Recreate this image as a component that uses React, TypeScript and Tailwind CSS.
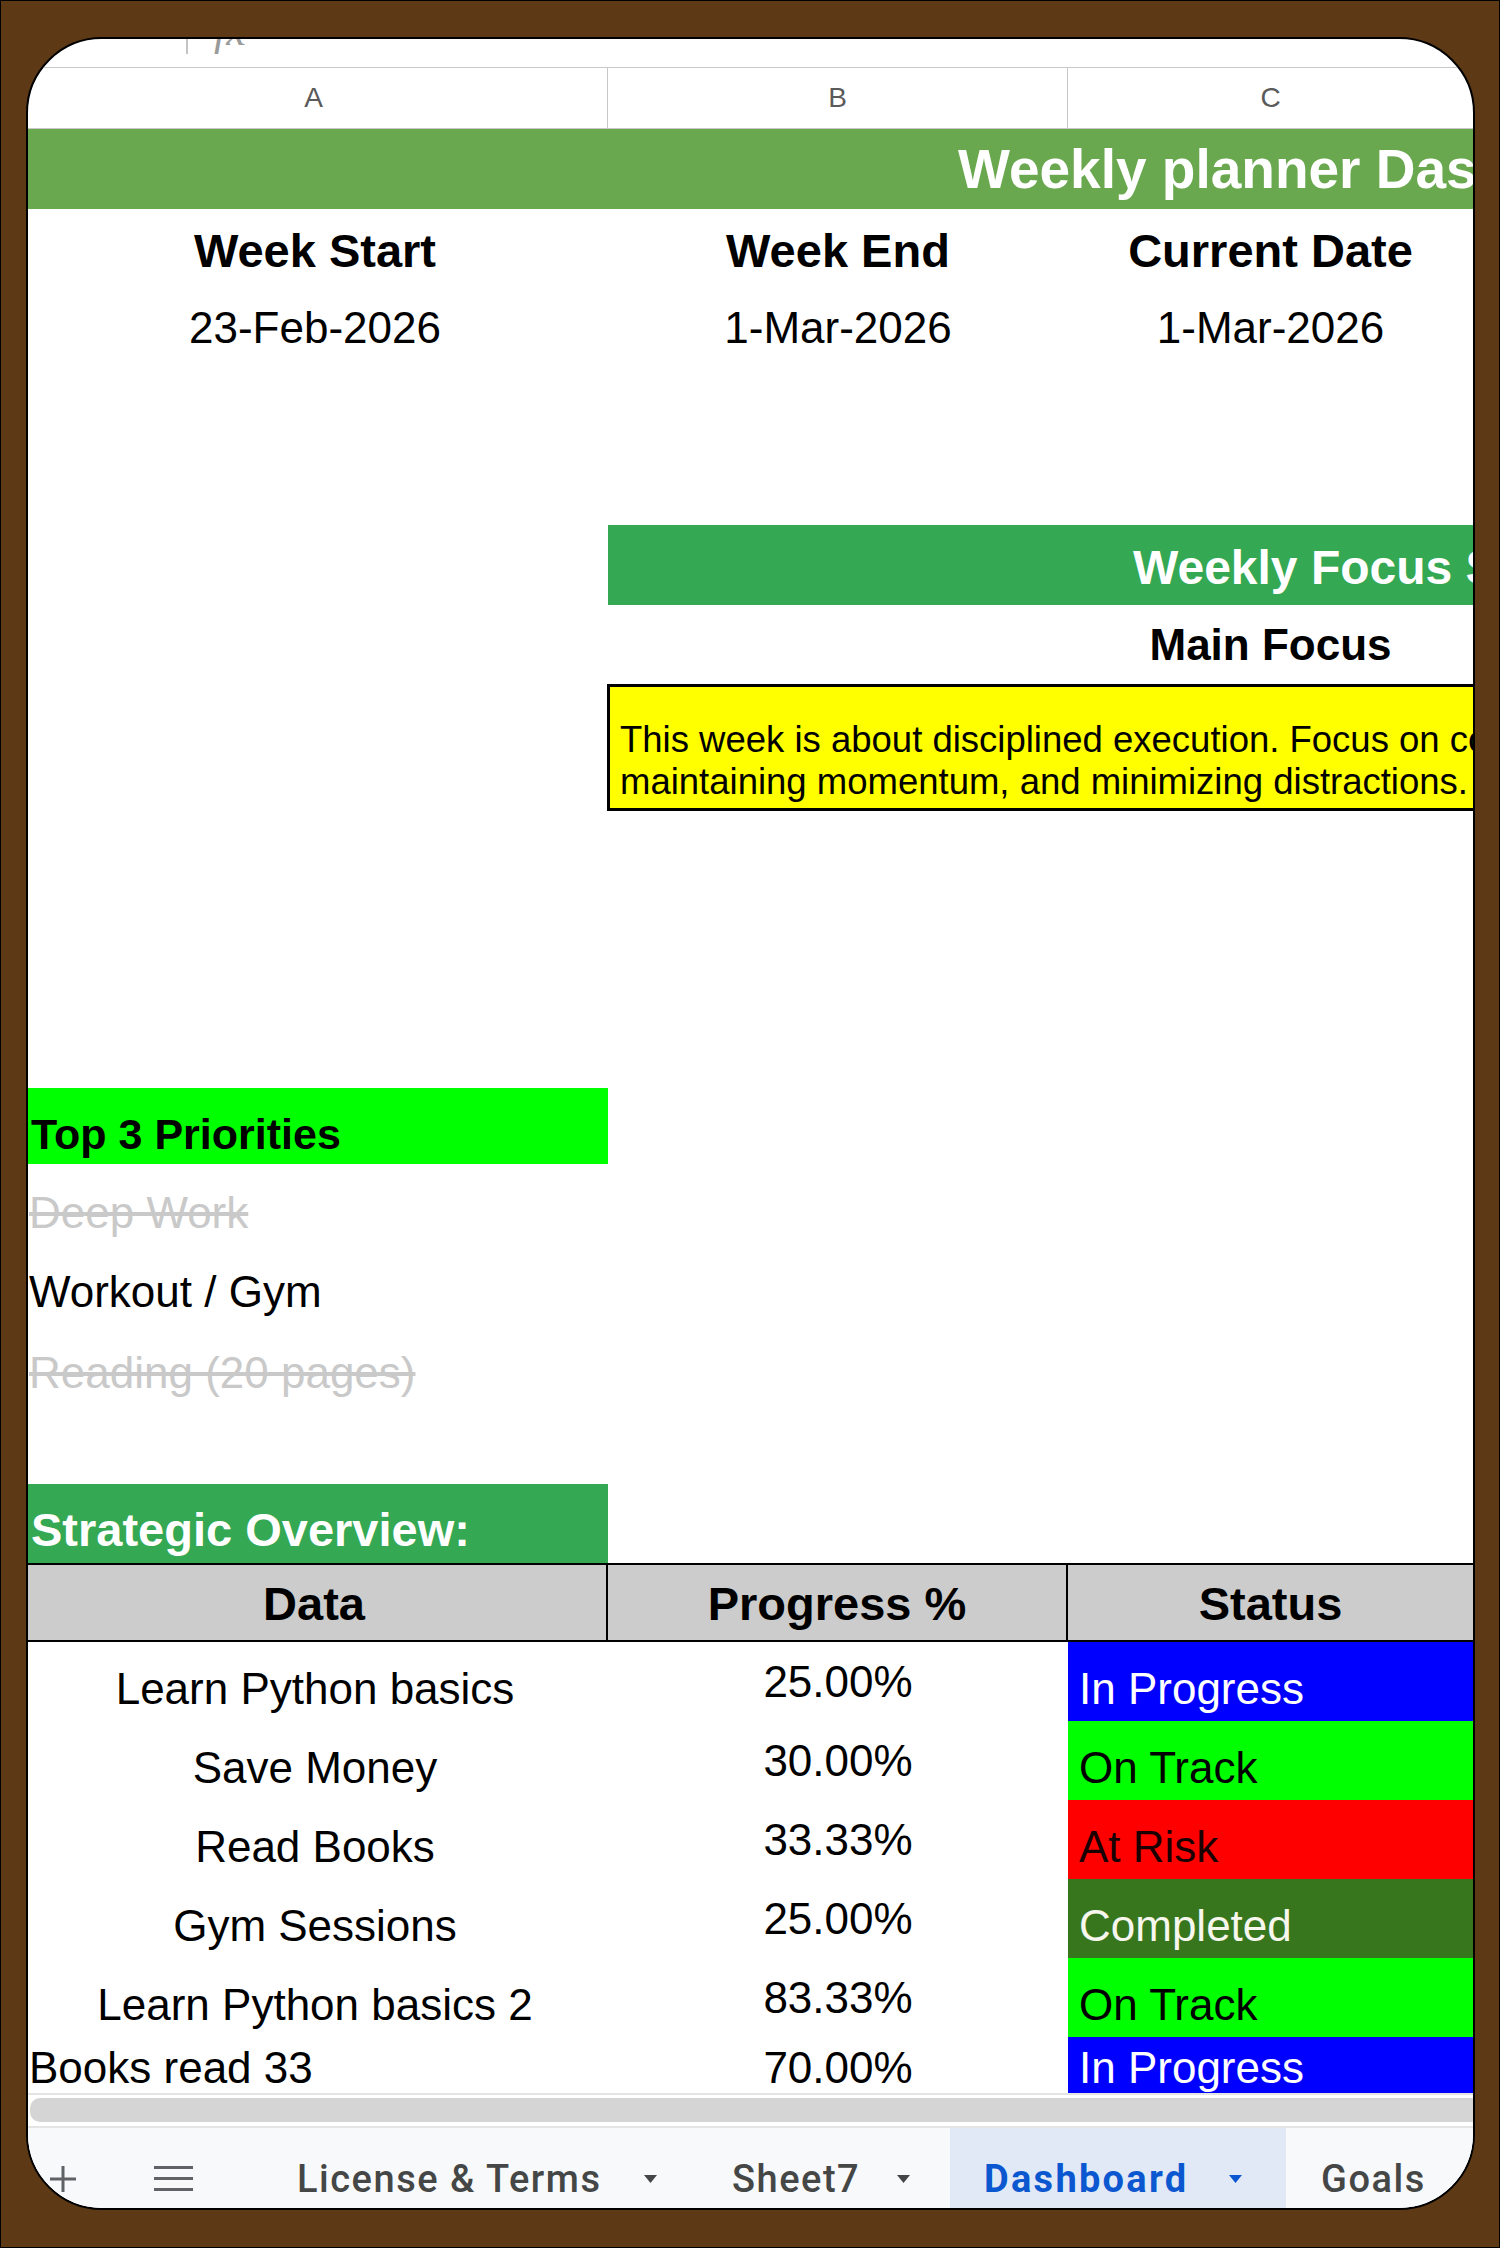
import React from 'react';

const sans = "font-['Liberation_Sans',Arial,sans-serif]";

const rows = [
  { name: 'Learn Python basics', pct: '25.00%', status: 'In Progress', bg: 'bg-[#0000ff]', fg: 'text-white' },
  { name: 'Save Money', pct: '30.00%', status: 'On Track', bg: 'bg-[#00ff00]', fg: 'text-black' },
  { name: 'Read Books', pct: '33.33%', status: 'At Risk', bg: 'bg-[#ff0000]', fg: 'text-[#1a0000]' },
  { name: 'Gym Sessions', pct: '25.00%', status: 'Completed', bg: 'bg-[#38761d]', fg: 'text-[#f7f7ee]' },
  { name: 'Learn Python basics 2', pct: '83.33%', status: 'On Track', bg: 'bg-[#00ff00]', fg: 'text-black' },
];

const Caret: React.FC<{ color?: string }> = ({ color = '#444746' }) => (
  <svg width="13" height="8" viewBox="0 0 13 8">
    <path d="M0 0 L13 0 L6.5 8 Z" fill={color} />
  </svg>
);

const App: React.FC = () => {
  return (
    <div className={`w-[1500px] h-[2248px] bg-[#5d3a15] border border-black pt-[36px] pl-[25px] pr-[24px] pb-[37px] ${sans}`}>
      <div className="h-full rounded-[76px] border-2 border-black bg-white overflow-hidden flex flex-col">
        {/* formula bar remnant */}
        <div className="h-[28px] flex items-start overflow-hidden">
          <div className="ml-[158px] w-[2px] h-[15px] bg-[#c4c4c4]" />
          <span className="ml-[26px] -mt-[30px] text-[44px] italic text-[#9a9a9a] font-['Liberation_Serif',serif] leading-none">
            fx
          </span>
        </div>

        {/* column letters */}
        <div className="h-[62px] flex border-t border-b border-[#c8c8c8] text-[28px] text-[#5a5a5a]">
          <div className="w-[580px] flex items-center justify-center pr-[8px] border-r border-[#c8c8c8]">A</div>
          <div className="w-[460px] flex items-center justify-center border-r border-[#c8c8c8]">B</div>
          <div className="flex-1 flex items-center justify-center">C</div>
        </div>

        {/* title */}
        <div className="h-[80px] bg-[#6aa84f] flex items-center overflow-hidden">
          <span className="pl-[930px] whitespace-nowrap text-white font-bold text-[55px]">
            Weekly planner Dashboard
          </span>
        </div>

        {/* dates */}
        <div className="h-[79px] flex font-bold text-[47px] text-black pt-[5px]">
          <div className="w-[580px] flex items-center justify-center pr-[6px]">Week Start</div>
          <div className="w-[460px] flex items-center justify-center">Week End</div>
          <div className="flex-1 flex items-center justify-center">Current Date</div>
        </div>
        <div className="h-[79px] flex text-[44px] text-black">
          <div className="w-[580px] flex items-center justify-center pr-[6px]">23-Feb-2026</div>
          <div className="w-[460px] flex items-center justify-center">1-Mar-2026</div>
          <div className="flex-1 flex items-center justify-center">1-Mar-2026</div>
        </div>

        <div className="h-[158px]" />

        {/* weekly focus */}
        <div className="h-[80px] flex">
          <div className="w-[580px]" />
          <div className="flex-1 bg-[#34a853] flex items-center pt-[6px] overflow-hidden">
            <span className="pl-[525px] whitespace-nowrap text-white font-bold text-[48px]">
              Weekly Focus Summary
            </span>
          </div>
        </div>
        <div className="h-[79px] flex">
          <div className="w-[1040px]" />
          <div className="flex-1 flex items-center justify-center font-bold text-[44px] text-black">Main Focus</div>
        </div>
        <div className="h-[127px] flex">
          <div className="w-[579px]" />
          <div className="flex-1 bg-[#ffff00] border-[3px] border-r-0 border-black flex flex-col justify-end pb-[5px] pl-[10px] overflow-hidden text-[36.5px] leading-[42px] text-black">
            <span className="whitespace-nowrap">
              This week is about disciplined execution. Focus on completing high-impact tasks,
            </span>
            <span className="whitespace-nowrap">maintaining momentum, and minimizing distractions.</span>
          </div>
        </div>

        <div className="h-[277px]" />

        {/* priorities */}
        <div className="h-[76px] flex">
          <div className="w-[580px] bg-[#00ff00] flex items-center pt-[16px] pl-[3px] font-bold text-[43px] text-black">
            Top 3 Priorities
          </div>
        </div>
        <div className="h-[80px] flex items-center pt-[18px] pl-[1px] text-[44px] text-[#c9c9c9] line-through">
          Deep Work
        </div>
        <div className="h-[80px] flex items-center pt-[16px] pl-[1px] text-[44px] text-black">Workout / Gym</div>
        <div className="h-[80px] flex items-center pt-[18px] pl-[1px] text-[44px] text-[#c9c9c9] line-through">
          Reading (20 pages)
        </div>

        <div className="h-[80px]" />

        {/* strategic overview */}
        <div className="h-[79px] flex">
          <div className="w-[580px] bg-[#34a853] flex items-center pt-[14px] pl-[3px] font-bold text-[47px] text-white">
            Strategic Overview:
          </div>
        </div>
        <div className="h-[79px] flex bg-[#cccccc] border-t-2 border-b-2 border-black font-bold text-[47px] text-black">
          <div className="w-[580px] flex items-center justify-center pt-[4px] pr-[6px] border-r-2 border-black">Data</div>
          <div className="w-[460px] flex items-center justify-center pt-[4px] border-r-2 border-black">Progress %</div>
          <div className="flex-1 flex items-center justify-center pt-[4px]">Status</div>
        </div>

        {rows.map((r, i) => (
          <div key={i} className="h-[79px] flex text-[44px] text-black">
            <div className="w-[580px] flex items-center justify-center pt-[14px] pr-[6px]">{r.name}</div>
            <div className="w-[460px] flex items-center justify-center pt-[0px]">{r.pct}</div>
            <div className={`flex-1 flex items-center pt-[14px] pl-[11px] ${r.bg} ${r.fg}`}>{r.status}</div>
          </div>
        ))}
        <div className="h-[56px] flex text-[44px] text-black overflow-hidden">
          <div className="w-[580px] flex items-center pt-[6px] pl-[1px]">Books read 33</div>
          <div className="w-[460px] flex items-center justify-center pt-[6px]">70.00%</div>
          <div className="flex-1 flex items-center pt-[6px] pl-[11px] bg-[#0000ff] text-white">In Progress</div>
        </div>

        {/* horizontal scrollbar */}
        <div className="h-[35px] border-t-2 border-b-2 border-[#e4e4e4] bg-white">
          <div className="mt-[3px] ml-[2px] h-[24px] bg-[#d5d5d5] rounded-l-[10px]" />
        </div>

        {/* sheet tabs */}
        <div className="flex-1 bg-[#f8f9fa] flex items-stretch font-['Roboto',sans-serif] font-medium text-[38px] tracking-[0.04em] text-[#444746]">
          <div className="ml-[21px] w-[28px] flex items-center pt-[22px]">
            <svg width="28" height="28" viewBox="0 0 28 28">
              <path d="M14 1 V27 M1 14 H27" stroke="#5f6368" strokeWidth="3" />
            </svg>
          </div>
          <div className="ml-[77px] w-[39px] flex items-center pt-[22px]">
            <svg width="39" height="28" viewBox="0 0 39 28">
              <path d="M0 2.5 H39 M0 13.5 H39 M0 24.5 H39" stroke="#5f6368" strokeWidth="3" />
            </svg>
          </div>
          <div className="ml-[104px] flex items-center pt-[22px] whitespace-nowrap">
            <span className="w-[311px]">License &amp; Terms</span>
            <span className="ml-[36px]"><Caret /></span>
          </div>
          <div className="ml-[75px] flex items-center pt-[22px] whitespace-nowrap">
            <span className="w-[124px]">Sheet7</span>
            <span className="ml-[41px]"><Caret /></span>
          </div>
          <div className="ml-[40px] w-[336px] bg-[#e1e9f7] flex items-center pt-[22px] whitespace-nowrap text-[#0b57d0] font-bold tracking-[0.06em]">
            <span className="ml-[34px] w-[212px]">Dashboard</span>
            <span className="ml-[33px]"><Caret color="#0b57d0" /></span>
          </div>
          <div className="ml-[35px] flex items-center pt-[22px] whitespace-nowrap">Goals</div>
        </div>
      </div>
    </div>
  );
};

export default App;
